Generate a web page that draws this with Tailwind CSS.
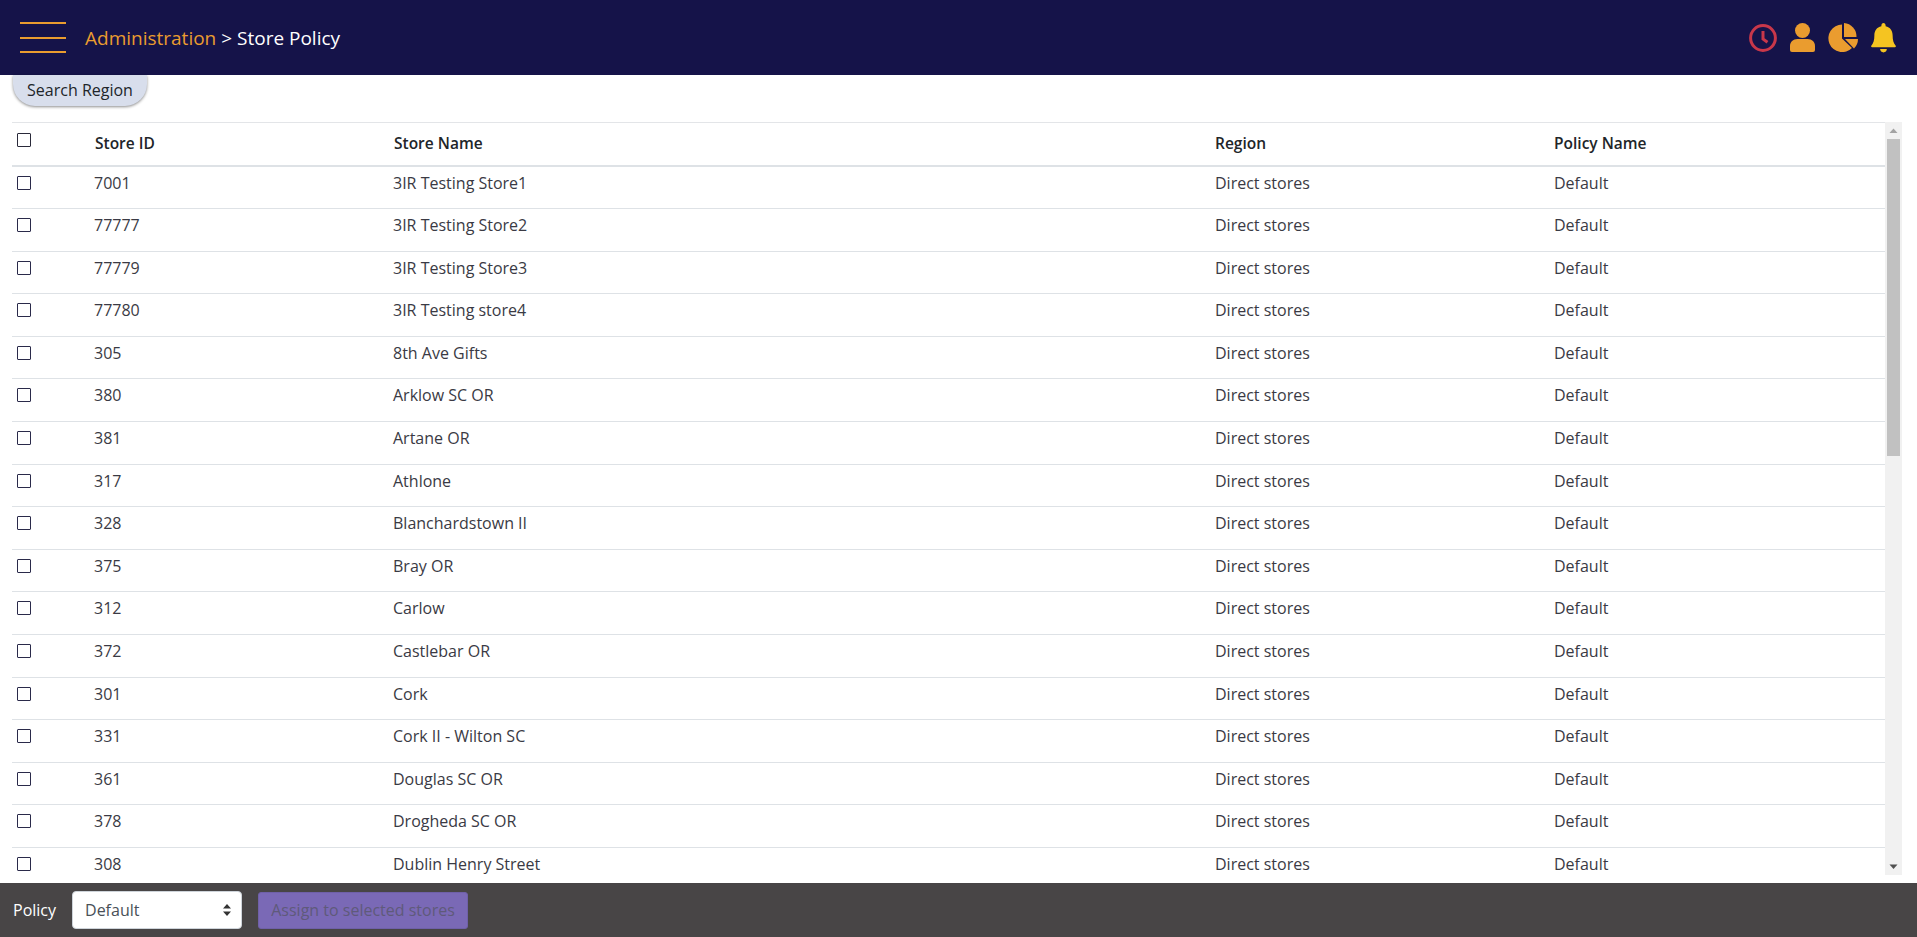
<!DOCTYPE html>
<html lang="en">
<head>
  <meta charset="UTF-8" />
  <title>Store Policy</title>
  <script src="https://cdn.jsdelivr.net/npm/@tailwindcss/browser@4"></script>
</head>
<body class="h-[937px] overflow-hidden bg-white font-['Open_Sans',sans-serif] text-[16px] text-[#212529]">
  <header class="h-[75px] bg-[#151349] flex items-center pl-[20px] pr-[21px]">
    <div class="w-[46px] h-[31px] flex flex-col justify-between">
      <span class="h-[2px] bg-[#ea9c2f]"></span>
      <span class="h-[2px] bg-[#ea9c2f]"></span>
      <span class="h-[2px] bg-[#ea9c2f]"></span>
    </div>
    <div class="ml-[19px] mt-[2px] text-[19px] text-white"><span class="text-[#ea9c2f]">Administration</span> &gt; Store Policy</div>
    <div class="ml-auto flex items-center gap-[13px]">
      <svg class="w-[28px] h-[28px]" viewBox="0 0 28 28" fill="none" stroke="#c8374a" stroke-width="3"><circle cx="14" cy="14" r="12.400"/><path d="M14 7v8l4.500 3.200"/></svg>
      <svg class="w-[25px] h-[29px]" viewBox="0 0 25 29" fill="#ea9c2f"><circle cx="12.500" cy="7.500" r="7.500"/><path d="M0 23c0-4 3-7 7.500-7h10c4.500 0 7.500 3 7.500 7v4a2 2 0 0 1-2 2H2a2 2 0 0 1-2-2z"/></svg>
      <svg class="w-[30px] h-[29px]" viewBox="0 0 30 29" fill="#ea9c2f"><path d="M14 1.500a13.800 13.800 0 1 0 10 23.500L14 15.500z"/><path d="M16 0a13.500 13.500 0 0 1 12.500 14H16z"/><path d="M17 16h13a13.500 13.500 0 0 1-4 9.500z"/></svg>
      <svg class="w-[25px] h-[30px]" viewBox="0 0 26 31" fill="#f5c421"><path d="M13 0c1.300 0 2.200 1 2.200 2.400v1c4.800 1 7.300 4.700 7.300 9.600 0 5 1 8 3.200 10.500.5.700.2 1.500-.7 1.500H1c-.9 0-1.200-.8-.7-1.500C2.500 21 3.500 18 3.500 13c0-4.900 2.500-8.600 7.300-9.600v-1C10.800 1 11.700 0 13 0z"/><path d="M9.500 27h7c0 2-1.500 3.500-3.500 3.500S9.500 29 9.500 27z"/></svg>
    </div>
  </header>

  <div class="h-[808px]">
    <button class="block ml-[13px] w-[134px] h-[31px] pb-[2px] bg-[#d8deec] rounded-b-[22px] text-[16px] text-[#212529] shadow-[0_1px_3px_rgba(0,0,0,0.45)]">Search Region</button>
    <div class="mt-[16px] ml-[12px] w-[1890px] h-[753px] flex">
      <div class="flex-1 overflow-hidden">
        <table class="w-full table-fixed border-collapse">
          <colgroup>
            <col class="w-[70px]" /><col class="w-[299px]" /><col class="w-[822px]" /><col class="w-[339px]" /><col />
          </colgroup>
          <thead>
            <tr class="h-[43.500px] border-t border-t-[#e3e5e8] border-b-2 border-b-[#dee2e6] text-[#212529]">
              <th class="align-top pl-[5px] pt-[10px] text-left"><span class="block w-[14px] h-[14px] border-[1.500px] border-[#2a2a3a] rounded-[1px]"></span></th>
              <th class="text-left font-semibold pl-[13px] text-[15.500px]">Store ID</th>
              <th class="text-left font-semibold pl-[13px] text-[15.500px]">Store Name</th>
              <th class="text-left font-semibold pl-[12px] text-[15.500px]">Region</th>
              <th class="text-left font-semibold pl-[12px] text-[15.500px]">Policy Name</th>
            </tr>
          </thead>
          <tbody id="rows"></tbody>
        </table>
      </div>
      <div class="w-[17px] bg-[#f1f1f1] flex flex-col items-center">
        <svg class="w-[17px] h-[17px] shrink-0" viewBox="0 0 17 17" fill="#a3a3a3"><path d="M4.500 11 8.500 6.500 12.500 11z"/></svg>
        <div class="w-[13px] h-[317px] bg-[#c1c1c1]"></div>
        <svg class="w-[17px] h-[17px] shrink-0 mt-auto" viewBox="0 0 17 17" fill="#505050"><path d="M4.500 6.500h8L8.500 11z"/></svg>
      </div>
    </div>
  </div>

  <footer class="h-[54px] bg-[#484546] flex items-center pl-[13px]">
    <span class="text-white text-[16px]">Policy</span>
    <div class="ml-[16px] w-[170px] h-[38px] bg-white rounded-[4px] border border-[#ced4da] flex items-center justify-between pl-[12px] pr-[10px] text-[#495057] text-[16px]">
      Default
      <svg class="w-[8px] h-[12px]" viewBox="0 0 8 12" fill="#333"><path d="M4 0 8 4.500H0zM4 12 0 7.500h8z"/></svg>
    </div>
    <button class="ml-[16px] w-[210px] h-[37px] bg-[#7a69b6] rounded-[3px] border border-[#6f60a8] text-[#5f5a7a] text-[16px]">Assign to selected stores</button>
  </footer>

  <script>
    const stores = [
      ["7001", "3IR Testing Store1"],
      ["77777", "3IR Testing Store2"],
      ["77779", "3IR Testing Store3"],
      ["77780", "3IR Testing store4"],
      ["305", "8th Ave Gifts"],
      ["380", "Arklow SC OR"],
      ["381", "Artane OR"],
      ["317", "Athlone"],
      ["328", "Blanchardstown II"],
      ["375", "Bray OR"],
      ["312", "Carlow"],
      ["372", "Castlebar OR"],
      ["301", "Cork"],
      ["331", "Cork II - Wilton SC"],
      ["361", "Douglas SC OR"],
      ["378", "Drogheda SC OR"],
      ["308", "Dublin Henry Street"],
    ];
    const cell = "align-top pl-[12px] pt-[4px] text-[16px] text-[#3a3a44]";
    document.getElementById("rows").innerHTML = stores.map(s => `
      <tr class="h-[42.600px] border-b border-[#dee2e6]">
        <td class="align-top pl-[5px] pt-[9px]"><span class="block w-[14px] h-[14px] border-[1.500px] border-[#2a2a4a] rounded-[1px]"></span></td>
        <td class="${cell}">${s[0]}</td>
        <td class="${cell}">${s[1]}</td>
        <td class="${cell}">Direct stores</td>
        <td class="${cell}">Default</td>
      </tr>`).join("");
  </script>
</body>
</html>
